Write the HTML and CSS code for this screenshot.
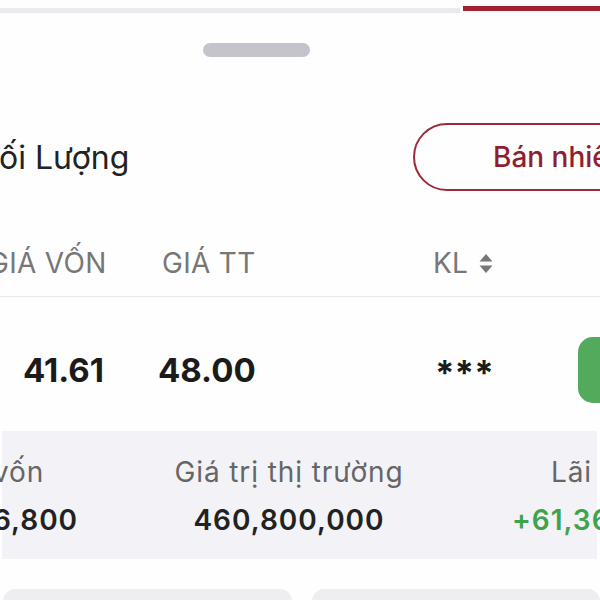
FILE: index.html
```html
<!DOCTYPE html>
<html lang="vi">
<head>
<meta charset="utf-8">
<link rel="stylesheet" href="styles.css">
</head>
<body>
<div class="screen">
  <div class="tabs">
    <div class="tab-gray"></div>
    <div class="tab-red"></div>
  </div>
  <div class="handle"></div>
  <div class="title-row">
    <div class="title">ối Lượng</div>
    <div class="sell-btn">Bán nhiều</div>
  </div>
  <div class="thead">
    <div class="th c1">GIÁ VỐN</div>
    <div class="th c2">GIÁ TT</div>
    <div class="th c3">KL
      <svg class="sort" width="16" height="22" viewBox="0 0 16 22"><path d="M8 2 L14.5 9.5 H1.5 Z" fill="#777"/><path d="M8 21 L14.5 13.5 H1.5 Z" fill="#777"/></svg>
    </div>
  </div>
  <div class="trow">
    <div class="td c1">41.61</div>
    <div class="td c2">48.00</div>
    <div class="td c3">***</div>
    <div class="green-btn"></div>
  </div>
  <div class="summary">
    <div class="scol s1">
      <div class="slabel">vốn</div>
      <div class="svalue">6,800</div>
    </div>
    <div class="scol s2">
      <div class="slabel">Giá trị thị trường</div>
      <div class="svalue">460,800,000</div>
    </div>
    <div class="scol s3">
      <div class="slabel">Lãi</div>
      <div class="svalue green">+61,360,000</div>
    </div>
  </div>
  <div class="cards">
    <div class="card"></div>
    <div class="card"></div>
  </div>
</div>
</body>
</html>
```
FILE: styles.css
```css
html, body {
  margin: 0;
  padding: 0;
  background: #fefefe;
}
.screen {
  width: 600px;
  height: 600px;
  overflow: hidden;
  font-family: Inter, "Liberation Sans", sans-serif;
  color: #1f1f1f;
  background: #fefefe;
}
.tabs {
  display: flex;
  align-items: flex-start;
  padding-top: 6px;
  height: 8px;
}
.tab-gray {
  flex: 1;
  height: 5px;
  margin-top: 2px;
  background: #e9e9ee;
}
.tab-red {
  width: 137px;
  height: 5px;
  margin-left: 3px;
  background: #a2232d;
}
.handle {
  width: 107px;
  height: 14px;
  border-radius: 7px;
  background: #c5c4cc;
  margin: 29px 0 0 203px;
}
.title-row {
  display: flex;
  align-items: center;
  margin-top: 66px;
  height: 68px;
}
.title {
  font-size: 32px;
  color: #222;
  margin-left: -1px;
  flex: 1 1 auto;
  white-space: nowrap;
}
.sell-btn {
  flex-shrink: 0;
  box-sizing: border-box;
  width: 230px;
  height: 68px;
  border: 2px solid #9b2b3a;
  border-radius: 34px;
  margin-right: -43px;
  display: flex;
  align-items: center;
  padding-left: 78px;
  font-size: 28px;
  font-weight: 500;
  color: #8f1f30;
  white-space: nowrap;
}
.thead {
  display: flex;
  align-items: center;
  height: 66px;
  margin-top: 39px;
  border-bottom: 1px solid #e8e8ea;
}
.th {
  flex-shrink: 0;
  font-size: 28px;
  letter-spacing: 0.3px;
  color: #777;
  white-space: nowrap;
  display: flex;
  align-items: center;
}
.thead .c1 { width: 174px; margin-left: -12px; }
.thead .c2 { width: 271px; }
.thead .c3 { width: 143px; }
.sort { margin-left: 10px; }
.trow {
  display: flex;
  align-items: center;
  box-sizing: border-box;
  height: 134px;
  padding-top: 12px;
}
.td {
  flex-shrink: 0;
  font-size: 33px;
  font-weight: 700;
  color: #1b1b1b;
  white-space: nowrap;
}
.trow .c1 { padding-left: 23px; width: 135px; }
.trow .c2 { width: 277px; }
.trow .c3 { width: 143px; font-size: 35px; letter-spacing: 0; padding-top: 6px; }
.green-btn {
  flex-shrink: 0;
  width: 80px;
  height: 66px;
  border-radius: 15px;
  background: #53a95c;
}
.summary {
  display: flex;
  box-sizing: border-box;
  height: 128px;
  margin: 0 3px 0 2px;
  padding-top: 24px;
  background: #f3f3f7;
  white-space: nowrap;
}
.scol {
  flex-shrink: 0;
  display: flex;
  flex-direction: column;
  gap: 14px;
}
.slabel {
  font-size: 28px;
  letter-spacing: 0.9px;
  color: #666;
  line-height: 34px;
}
.svalue {
  font-size: 28px;
  font-weight: 600;
  letter-spacing: 1px;
  color: #222;
  line-height: 34px;
}
.svalue.green { color: #3fa34d; }
.s1 { width: 180px; margin-left: -9px; align-items: flex-start; }
.s2 { width: 232px; align-items: center; }
.s3 { align-items: flex-start; }
.s3 .slabel { margin-left: 146px; }
.s3 .svalue { margin-left: 107px; }
.cards {
  display: flex;
  gap: 20px;
  margin: 30px 0 0 3px;
}
.card {
  flex: 1;
  height: 30px;
  border-radius: 12px 12px 0 0;
  background: #eeeef1;
}
```
